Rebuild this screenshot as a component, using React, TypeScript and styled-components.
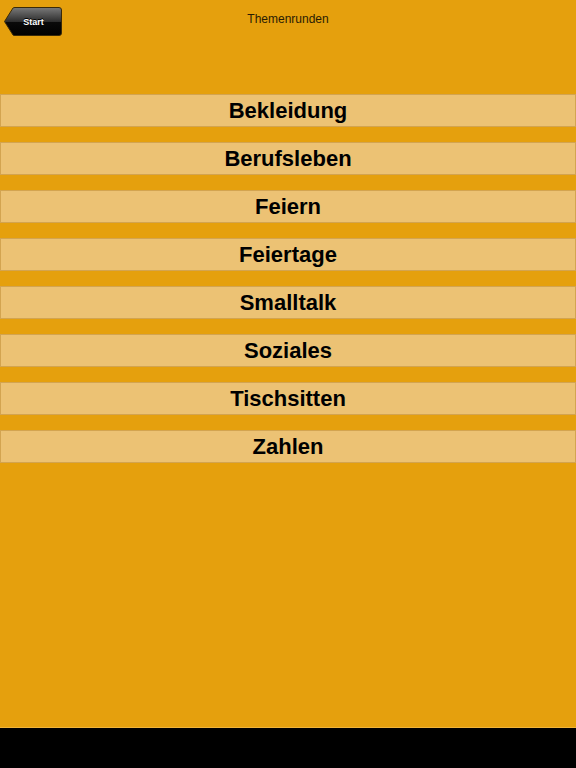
import styled, { createGlobalStyle } from "styled-components";

const GlobalStyle = createGlobalStyle`
    html, body {
        margin: 0;
        padding: 0;
        background: #000;
    }
    #root {
        width: 576px;
        height: 768px;
    }
`;

const Screen = styled.div`
    display: flex;
    flex-direction: column;
    width: 576px;
    height: 768px;
    font-family: "Liberation Sans", Arial, sans-serif;
`;

const Content = styled.div`
    flex: 0 0 727px;
    background: #e5a00d;
    border-bottom: 1px solid #f0b43a;
    display: flex;
    flex-direction: column;
`;

const NavBar = styled.div`
    position: relative;
    height: 44px;
    display: flex;
    align-items: center;
    justify-content: center;
`;

const Title = styled.div`
    font-size: 12px;
    color: #2a1c04;
    margin-top: -6px;
`;

const BackButton = styled.button`
    position: absolute;
    left: 4px;
    top: 7px;
    width: 58px;
    height: 29px;
    border: none;
    padding: 0 0 0 1px;
    background: transparent;
    cursor: pointer;
    display: flex;
    align-items: center;
    justify-content: center;
`;

const BackShape = styled.svg`
    position: absolute;
    left: 0;
    top: 0;
`;

const BackLabel = styled.span`
    position: relative;
    color: #fff;
    font-size: 9px;
    font-weight: bold;
    text-shadow: 0 -1px 0 #000;
    margin-top: 1px;
`;

const List = styled.div`
    display: flex;
    flex-direction: column;
    gap: 15px;
    margin-top: 50px;
`;

const Row = styled.div`
    height: 31px;
    background: #ecc274;
    border: 1px solid #d3a450;
    display: flex;
    align-items: center;
    justify-content: center;
    font-size: 22px;
    font-weight: bold;
    color: #000;
`;

const BottomBar = styled.div`
    flex: 1;
    background: #000;
`;

const topics = [
    "Bekleidung",
    "Berufsleben",
    "Feiern",
    "Feiertage",
    "Smalltalk",
    "Soziales",
    "Tischsitten",
    "Zahlen",
];

const App = () => {
    return (
        <Screen>
            <GlobalStyle />
            <Content>
                <NavBar>
                    <BackButton>
                        <BackShape width="58" height="29" viewBox="0 0 58 29">
                            <defs>
                                <linearGradient id="backGrad" x1="0" y1="0" x2="0" y2="1">
                                    <stop offset="0" stopColor="#7a7a7a" />
                                    <stop offset="0.5" stopColor="#2e2e2e" />
                                    <stop offset="0.52" stopColor="#0a0a0a" />
                                    <stop offset="1" stopColor="#000" />
                                </linearGradient>
                            </defs>
                            <path
                                d="M0.5 14.5 L9 1 Q9.6 0.5 11 0.5 L55 0.5 Q57.5 0.5 57.5 3 L57.5 26 Q57.5 28.5 55 28.5 L11 28.5 Q9.6 28.5 9 28 Z"
                                fill="url(#backGrad)"
                                stroke="#3a2a08"
                                strokeWidth="1"
                            />
                        </BackShape>
                        <BackLabel>Start</BackLabel>
                    </BackButton>
                    <Title>Themenrunden</Title>
                </NavBar>
                <List>
                    {topics.map((t) => (
                        <Row key={t}>{t}</Row>
                    ))}
                </List>
            </Content>
            <BottomBar />
        </Screen>
    );
};

export default App;
